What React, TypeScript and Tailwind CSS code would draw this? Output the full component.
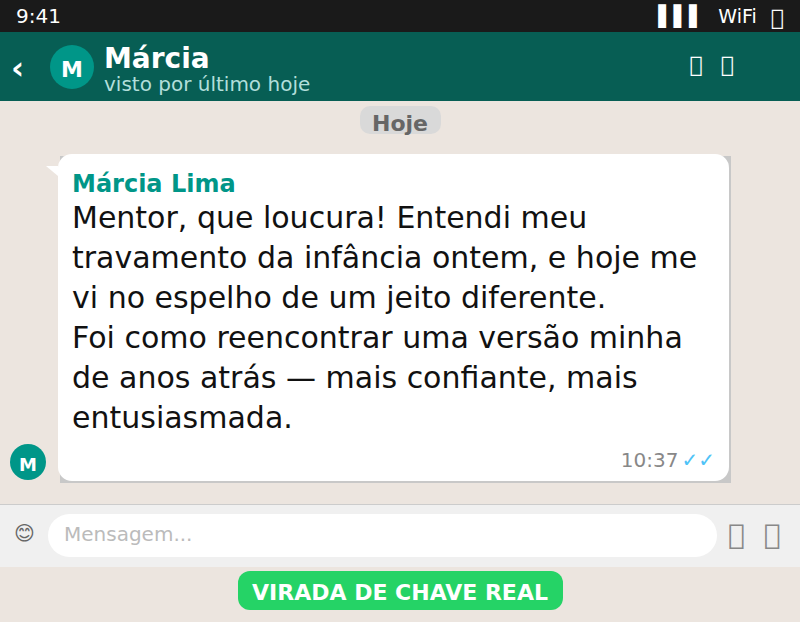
export default function App() {
  return (
    <div className="w-[800px] h-[622px] overflow-hidden flex flex-col bg-[#ece5df] font-['DejaVu_Sans',sans-serif]">
      {/* status bar */}
      <div className="h-8 shrink-0 bg-[#1a1a1a] text-white flex items-center justify-between pl-4 pr-[16px] text-[20px]">
        <span>9:41</span>
        <div className="flex items-center gap-[14px]">
          <span>▌▌▌</span>
          <span className="text-[19px]">WiFi</span>
          <span className="text-[22px] mt-[3px]">{"\uE000"}</span>
        </div>
      </div>

      {/* header */}
      <div className="h-[69px] shrink-0 bg-[#075e54] text-white flex items-center pl-[11px] pr-[66px]">
        <span className="w-[39px] text-[32px] font-bold leading-none mt-[2px]">‹</span>
        <div className="w-11 h-11 rounded-full bg-[#009688] flex items-center justify-center text-[22px] font-bold pt-[6px]">M</div>
        <div className="ml-[10px] flex-1 flex flex-col pt-[6px]">
          <span className="text-[28px] font-bold leading-[28px]">Márcia</span>
          <span className="text-[20px] leading-[22px] text-[#b2dfdb]">visto por último hoje</span>
        </div>
        <div className="flex items-center gap-[18px] text-[22px] -mt-[5px]">
          <span>{"\uE000"}</span>
          <span>{"\uE000"}</span>
        </div>
      </div>

      {/* chat */}
      <div className="flex-1 flex flex-col">
        <div className="flex justify-center pt-[5px]">
          <span className="w-[81px] h-[28px] rounded-[10px] bg-[#d9d9d9] text-[#666] text-[22px] font-bold leading-[35px] text-center">Hoje</span>
        </div>
        <div className="flex items-end pl-[10px] pt-[20px]">
          <div className="w-9 h-9 rounded-full bg-[#009688] text-white flex items-center justify-center text-[18px] font-bold mb-[1px] pt-[4px]">M</div>
          <div className="relative ml-3 w-[671px]">
            <div className="absolute left-[2px] top-[2px] -right-[2px] -bottom-[2px] bg-[#c8c8c8]" />
            <div className="absolute -left-3 top-3 w-3 h-[10px] bg-white [clip-path:polygon(0_0,100%_0,100%_100%)]" />
            <div className="relative bg-white rounded-[14px] pt-[15px] pr-[14px] pb-[9px] pl-[14px]">
              <div className="text-[#009688] text-[24px] font-bold leading-[30px]">Márcia Lima</div>
              <p className="text-[#111] text-[30px] leading-[40px] -mt-[1px]">
                Mentor, que loucura! Entendi meu travamento da infância ontem, e hoje me vi no espelho de um jeito diferente.
                <br />
                Foi como reencontrar uma versão minha de anos atrás — mais confiante, mais entusiasmada.
              </p>
              <div className="flex justify-end items-center gap-[3px] mt-[10px] text-[20px] leading-[24px] text-[#888]">
                <span>10:37</span>
                <span className="text-[#4fc3f7]">✓✓</span>
              </div>
            </div>
          </div>
        </div>
      </div>

      {/* input */}
      <div className="h-[63px] shrink-0 bg-[#f0f0f0] border-t border-[#cccccc] flex items-center pl-[14px]">
        <span className="text-[20px] text-[#666] w-[34px] leading-none -mt-[6px]">😊</span>
        <div className="w-[669px] h-[43px] rounded-[22px] bg-white pl-4 pb-[2px] flex items-center text-[20px] text-[#bbb] -mt-[2px]">Mensagem...</div>
        <div className="ml-[11px] flex items-center gap-[19px] text-[28px] text-[#888] -mt-[3px]">
          <span>{"\uE000"}</span>
          <span>{"\uE000"}</span>
        </div>
      </div>

      {/* cta */}
      <div className="h-[55px] shrink-0 flex justify-center pt-1">
        <div className="w-[325px] h-[39px] rounded-[12px] bg-[#25d366] text-white text-[22px] font-bold leading-[43px] text-center">VIRADA DE CHAVE REAL</div>
      </div>
    </div>
  );
}
